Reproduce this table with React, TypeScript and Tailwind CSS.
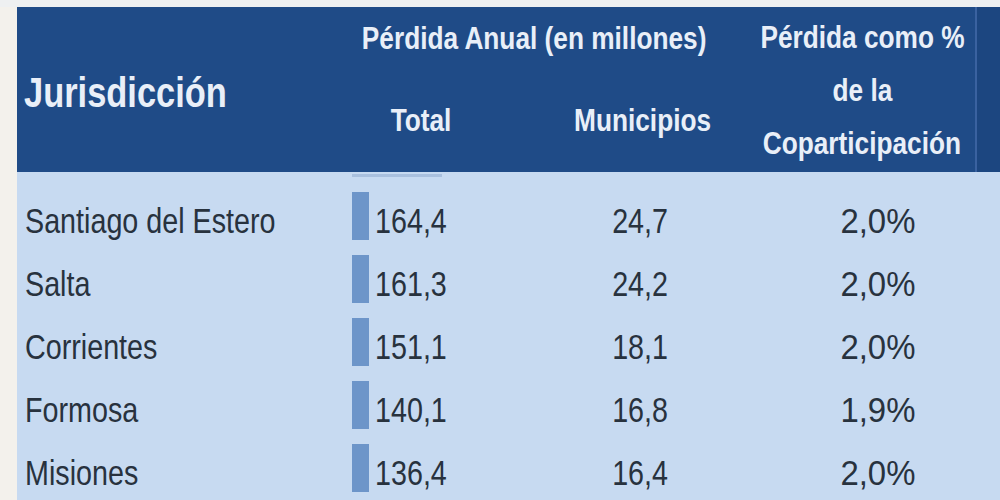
import React from 'react'

const rows = [
  { name: 'Santiago del Estero', total: '164,4', mun: '24,7', pct: '2,0%' },
  { name: 'Salta', total: '161,3', mun: '24,2', pct: '2,0%' },
  { name: 'Corrientes', total: '151,1', mun: '18,1', pct: '2,0%' },
  { name: 'Formosa', total: '140,1', mun: '16,8', pct: '1,9%' },
  { name: 'Misiones', total: '136,4', mun: '16,4', pct: '2,0%' },
]

// the source uses a narrow face; squeeze Liberation Sans to the same widths
const Narrow = ({ children, left }: { children: React.ReactNode; left?: boolean }) => (
  <span className={`inline-block whitespace-nowrap scale-x-[0.82] ${left ? 'origin-left' : 'origin-center'}`}>
    {children}
  </span>
)

const App = () => {
  return (
    <div className="w-[1000px] h-[500px] overflow-hidden bg-[#f3f1ec] flex flex-col font-['Liberation_Sans',sans-serif]">
      <div className="h-[7px] shrink-0 bg-[#eef0f1]" />

      <div className="flex flex-col flex-1 pl-[17px]">
        {/* header */}
        <div className="h-[165px] shrink-0 flex bg-[#1f4b87] text-[#e9eff8] font-bold">
          <div className="w-[333px] flex items-center pl-[7px] pt-[7px] text-[42px] leading-none">
            <Narrow left>Jurisdicción</Narrow>
          </div>

          <div className="w-[396px] flex flex-col">
            <div className="mt-[15px] pr-[28px] flex justify-center text-[32px] leading-none">
              <Narrow>Pérdida Anual (en millones)</Narrow>
            </div>
            <div className="flex mt-[50px] text-[32px] leading-none">
              <div className="w-[142px] flex justify-center"><Narrow>Total</Narrow></div>
              <div className="w-[48px]" />
              <div className="w-[206px] flex justify-center"><Narrow>Municipios</Narrow></div>
            </div>
          </div>

          <div className="w-[229px] flex flex-col items-center pl-[3px] pt-[4px] text-[32px] leading-[53px]">
            <Narrow>Pérdida como %</Narrow>
            <Narrow>de la</Narrow>
            <Narrow>Coparticipación</Narrow>
          </div>

          <div className="flex-1 border-l-2 border-[#3a62a0] bg-[#1c4680]" />
        </div>

        {/* body */}
        <div className="flex-1 bg-[#c7daf1] text-[#28323e]">
          <div className="h-[15px] pl-[335px]">
            <div className="w-[90px] h-[3px] mt-[2px] bg-[#a9c0de]" />
          </div>

          {rows.map((r) => (
            <div key={r.name} className="h-[63px] flex items-center text-[35px] leading-none">
              <div className="w-[333px] pl-[8px]"><Narrow left>{r.name}</Narrow></div>
              <div className="w-[190px] h-full flex items-start">
                <div className="w-[17px] h-[48px] mt-[3px] ml-[2px] bg-[#6d95c9]" />
                <span className="ml-[6px] self-center"><Narrow left>{r.total}</Narrow></span>
              </div>
              <div className="w-[200px] text-center"><Narrow>{r.mun}</Narrow></div>
              <div className="w-[235px] pl-[40px] text-center">
                <span className="inline-block whitespace-nowrap scale-x-[0.94]">{r.pct}</span>
              </div>
            </div>
          ))}
        </div>
      </div>
    </div>
  )
}

export default App
